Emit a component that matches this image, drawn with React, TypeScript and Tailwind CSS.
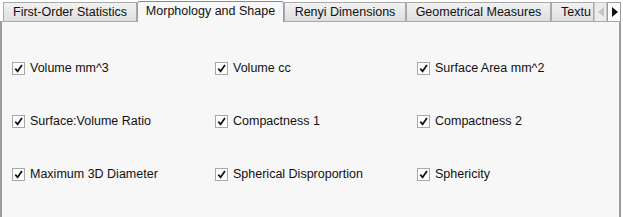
const tabs = ['First-Order Statistics', 'Morphology and Shape', 'Renyi Dimensions', 'Geometrical Measures', 'Textu']
const widths = ['w-[134px]', 'w-[147px]', 'w-[122px]', 'w-[145px]', 'w-[43px]']

const rows = [
  ['Volume mm^3', 'Volume cc', 'Surface Area mm^2'],
  ['Surface:Volume Ratio', 'Compactness 1', 'Compactness 2'],
  ['Maximum 3D Diameter', 'Spherical Disproportion', 'Sphericity'],
]

const Check = ({ label }: { label: string }) => (
  <div className="flex h-[14px] items-center gap-[5px]">
    <span className="flex h-[13px] w-[13px] items-center justify-center border border-[#a8a8a8] bg-white">
      <svg viewBox="0 0 12 12" className="h-[11px] w-[11px]">
        <path d="M2.5 6.2 L5 9 L9.8 2.2" fill="none" stroke="#111" strokeWidth="1.9" strokeLinejoin="miter" />
      </svg>
    </span>
    <span className="text-[12.5px] leading-[14px]">{label}</span>
  </div>
)

export default function App() {
  return (
    <div className="h-[217px] w-[623px] bg-white font-['Liberation_Sans',Arial,sans-serif] text-[12px] text-[#111]">
      <div className="flex h-[21px] items-end pl-[3px]">
        {tabs.map((t, i) =>
          i === 1 ? (
            <div
              key={t}
              className={`${widths[i]} -mb-px flex h-[21px] items-center justify-center rounded-t-[3px] border border-b-0 border-[#8aa0c0] border-t-[#6d8fc4] bg-[#f7f7f7] pb-[2px] text-[12.5px]`}
            >
              {t}
            </div>
          ) : (
            <div
              key={t}
              className={`${widths[i]} flex h-[19px] items-center ${i === 4 ? 'justify-end pr-[2px]' : 'justify-center'} overflow-hidden whitespace-nowrap border border-b-0 border-[#a9a9a9] bg-gradient-to-b from-[#f2f2f2] to-[#dedede] text-[12.5px]`}
            >
              {t}
            </div>
          ),
        )}
        <div className="flex h-[19px] w-[13px] items-center justify-center border border-b-0 border-[#c8c8c8] bg-[#ececec]">
          <span className="h-0 w-0 border-y-[5px] border-r-[6px] border-y-transparent border-r-[#c4c4c4]" />
        </div>
        <div className="flex h-[19px] w-[14px] items-center justify-center border border-b-0 border-[#9a9a9a] bg-white">
          <span className="ml-px h-0 w-0 border-y-[5px] border-l-[6px] border-y-transparent border-l-[#111]" />
        </div>
      </div>
      <div className="h-[196px] w-[621px] border-x-2 border-t border-x-[#9c9c9c] border-t-[#a9a9a9] bg-[#f7f7f7] pt-[39px]">
        <div className="grid grid-cols-[203px_202px_1fr] gap-y-[39px] pl-[10px]">
          {rows.flat().map((l) => (
            <Check key={l} label={l} />
          ))}
        </div>
      </div>
    </div>
  )
}
